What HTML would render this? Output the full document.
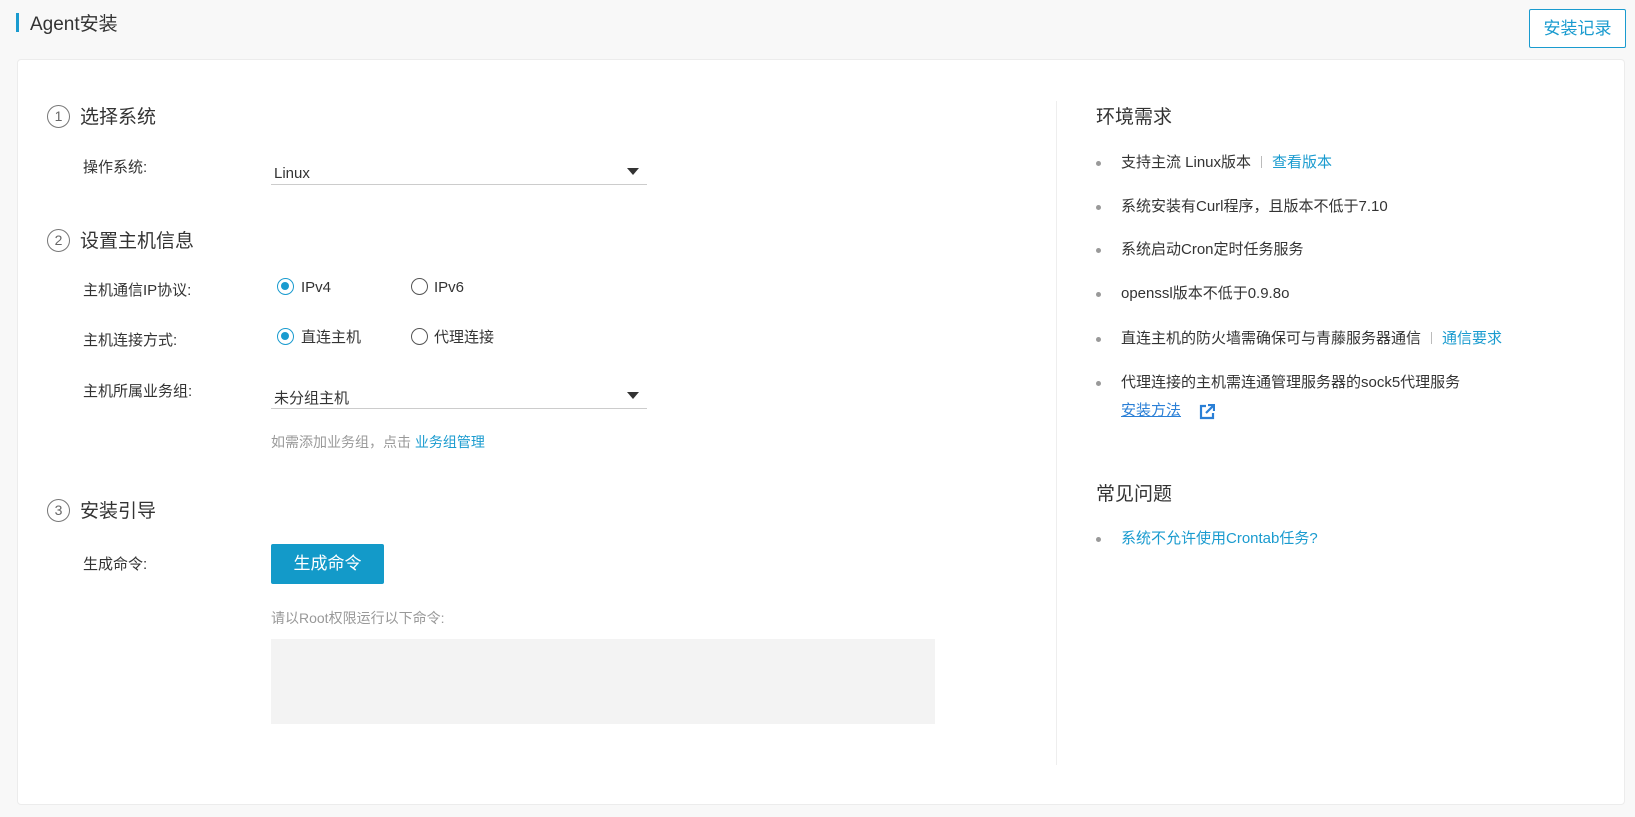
<!DOCTYPE html>
<html><head><meta charset="utf-8"><style>
*{margin:0;padding:0;box-sizing:border-box}
body{width:1635px;height:817px;background:#f8f8f8;font-family:"Liberation Sans","Noto Sans CJK SC",sans-serif;color:#333;position:relative;overflow:hidden;font-size:15px}
.a{position:absolute;white-space:nowrap;line-height:20px}
.blue{color:#1a9bcf}
.card{position:absolute;left:17px;top:59px;width:1608px;height:746px;background:#fff;border:1px solid #ececec;border-radius:4px}
.num{position:absolute;width:23px;height:23px;border:1px solid #777;border-radius:50%;font-size:14px;line-height:21px;text-align:center;color:#666}
.h{font-size:19px;line-height:24px}
.sel{position:absolute;left:271px;width:376px;border-bottom:1px solid #ccc;height:24px}
.arr{position:absolute;right:8px;top:7px;width:0;height:0;border-left:6px solid transparent;border-right:6px solid transparent;border-top:7px solid #333}
.rad{position:absolute;width:17px;height:17px;border-radius:50%;border:1.5px solid #555}
.rad.on{border-color:#1a9bcf}
.rad.on::after{content:"";position:absolute;left:3px;top:3px;width:8px;height:8px;border-radius:50%;background:#1a9bcf}
.dot{position:absolute;width:5px;height:5px;border-radius:50%;background:#999}
.sep{display:inline-block;width:1px;height:12px;background:#bbb;margin:0 10px;vertical-align:-1px}
</style></head><body>
<div style="position:absolute;left:16px;top:13px;width:3px;height:19px;background:#1a9bcf"></div>
<div class="a" style="left:30px;top:13px;font-size:19px;line-height:24px">Agent安装</div>
<div style="position:absolute;left:1529px;top:9px;width:97px;height:39px;border:1px solid #1a9bcf;border-radius:2px;color:#1a9bcf;font-size:17px;text-align:center;line-height:37px;background:#fff">安装记录</div>
<div class="card"></div>
<div style="position:absolute;left:1056px;top:101px;width:1px;height:664px;background:#eee"></div>

<div class="num" style="left:47px;top:105px">1</div>
<div class="a h" style="left:80px;top:106px">选择系统</div>
<div class="a" style="left:83px;top:158px">操作系统:</div>
<div class="sel" style="top:161px"><span class="a" style="left:3px;top:3px">Linux</span><div class="arr"></div></div>

<div class="num" style="left:47px;top:229px">2</div>
<div class="a h" style="left:80px;top:230px">设置主机信息</div>
<div class="a" style="left:83px;top:281px">主机通信IP协议:</div>
<div class="rad on" style="left:277px;top:278px"></div><div class="a" style="left:301px;top:278px">IPv4</div>
<div class="rad" style="left:411px;top:278px"></div><div class="a" style="left:434px;top:278px">IPv6</div>
<div class="a" style="left:83px;top:331px">主机连接方式:</div>
<div class="rad on" style="left:277px;top:328px"></div><div class="a" style="left:301px;top:328px">直连主机</div>
<div class="rad" style="left:411px;top:328px"></div><div class="a" style="left:434px;top:328px">代理连接</div>
<div class="a" style="left:83px;top:382px">主机所属业务组:</div>
<div class="sel" style="top:385px"><span class="a" style="left:3px;top:4px">未分组主机</span><div class="arr"></div></div>
<div class="a" style="left:271px;top:432px;font-size:14px;color:#999">如需添加业务组，点击 <span class="blue">业务组管理</span></div>

<div class="num" style="left:47px;top:499px">3</div>
<div class="a h" style="left:80px;top:500px">安装引导</div>
<div class="a" style="left:83px;top:555px">生成命令:</div>
<div style="position:absolute;left:271px;top:544px;width:113px;height:40px;background:#139ac9;border-radius:2px;color:#fff;font-size:17px;text-align:center;line-height:40px">生成命令</div>
<div class="a" style="left:271px;top:608px;font-size:14px;color:#999">请以Root权限运行以下命令:</div>
<div style="position:absolute;left:271px;top:639px;width:664px;height:85px;background:#f3f3f3"></div>

<div class="a h" style="left:1096px;top:106px">环境需求</div>
<div class="dot" style="left:1096px;top:161px"></div><div class="a" style="left:1121px;top:153px">支持主流 Linux版本<span class="sep"></span><span class="blue">查看版本</span></div>
<div class="dot" style="left:1096px;top:205px"></div><div class="a" style="left:1121px;top:197px">系统安装有Curl程序，且版本不低于7.10</div>
<div class="dot" style="left:1096px;top:248px"></div><div class="a" style="left:1121px;top:240px">系统启动Cron定时任务服务</div>
<div class="dot" style="left:1096px;top:292px"></div><div class="a" style="left:1121px;top:284px">openssl版本不低于0.9.8o</div>
<div class="dot" style="left:1096px;top:337px"></div><div class="a" style="left:1121px;top:329px">直连主机的防火墙需确保可与青藤服务器通信<span class="sep"></span><span class="blue">通信要求</span></div>
<div class="dot" style="left:1096px;top:381px"></div><div class="a" style="left:1121px;top:373px">代理连接的主机需连通管理服务器的sock5代理服务</div>
<div class="a" style="left:1121px;top:401px;color:#2a7fd6;text-decoration:underline">安装方法</div>
<svg style="position:absolute;left:1199px;top:404px" width="16" height="16" viewBox="0 0 16 16"><path d="M7 2H2v12h12V9" fill="none" stroke="#2a7fd6" stroke-width="2.2"/><path d="M9 1h6v6M15 1L7 9" fill="none" stroke="#2a7fd6" stroke-width="2.2"/></svg>

<div class="a h" style="left:1096px;top:483px">常见问题</div>
<div class="dot" style="left:1096px;top:537px"></div><div class="a blue" style="left:1121px;top:529px">系统不允许使用Crontab任务?</div>
</body></html>
